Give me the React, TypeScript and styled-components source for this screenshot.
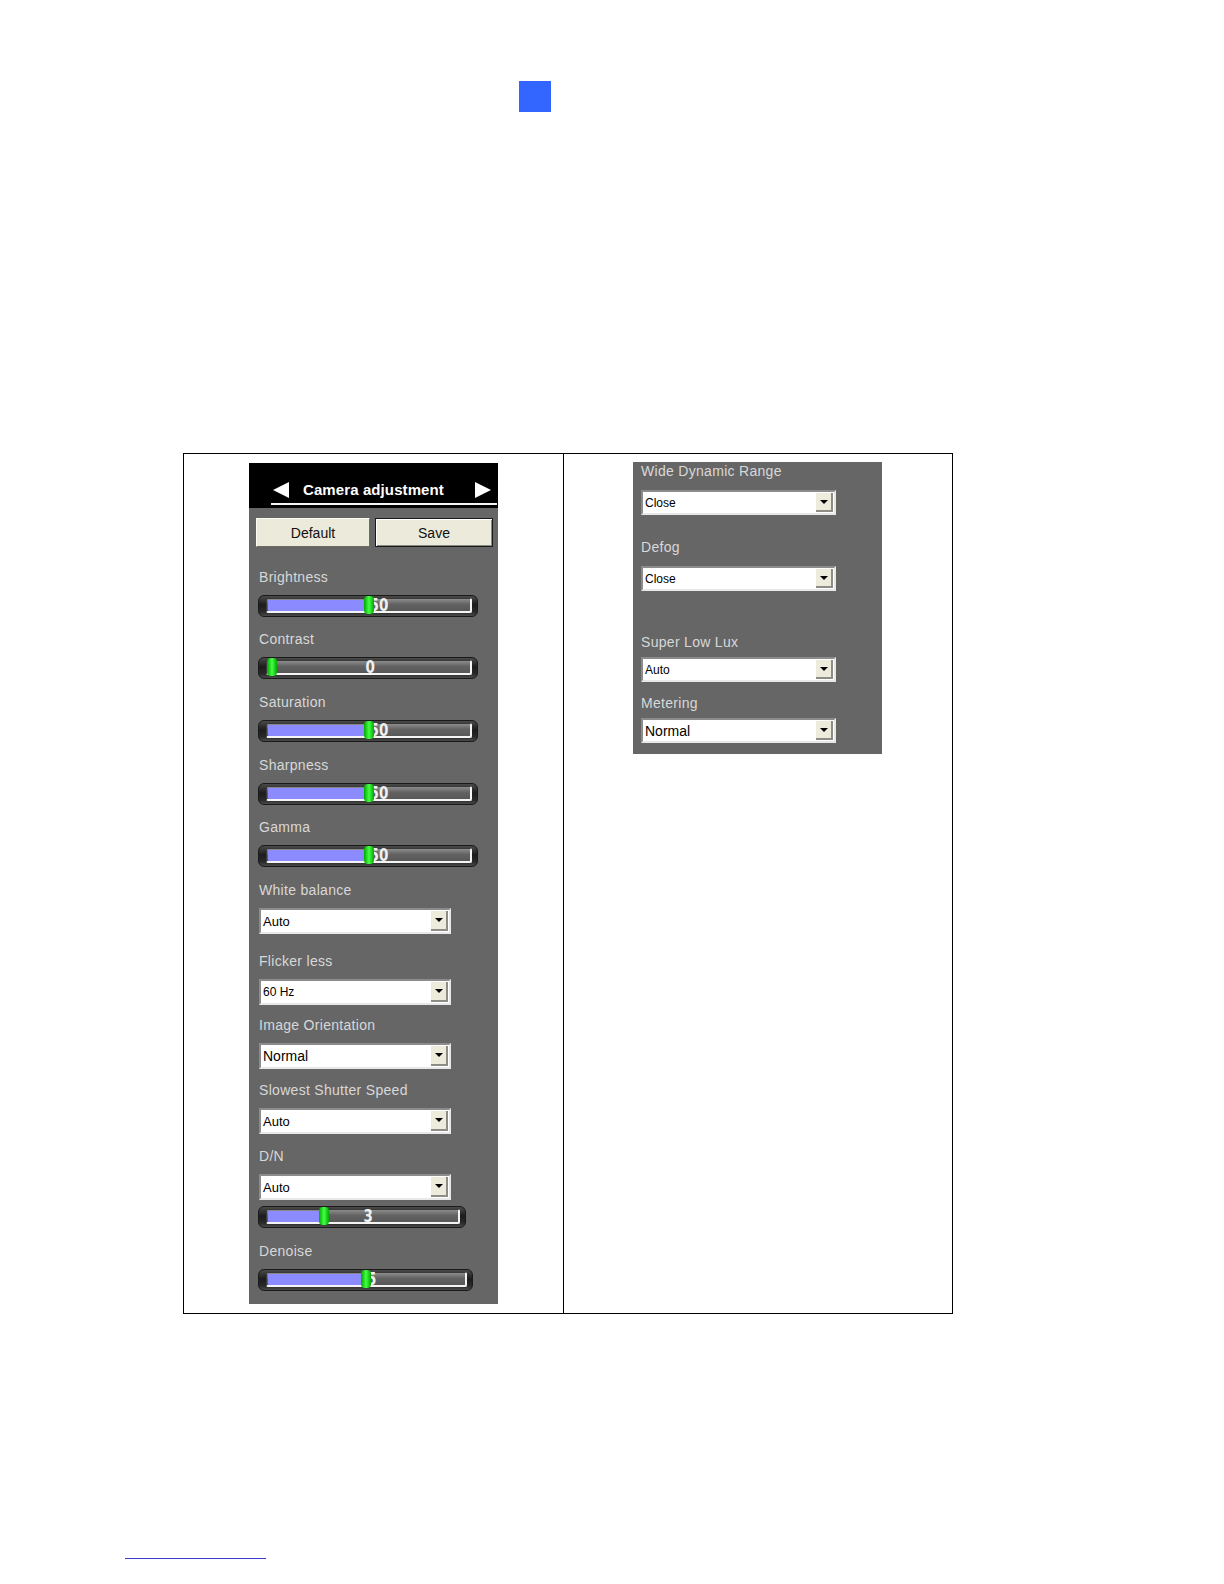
import React from 'react'
import styled, { createGlobalStyle } from 'styled-components'

const GlobalStyle = createGlobalStyle`
  html, body {
    margin: 0;
    padding: 0;
    background: #ffffff;
    overflow: hidden;
  }
  body {
    font-family: "Liberation Sans", Arial, sans-serif;
  }
`

const Page = styled.div`
  padding-top: 81px;
  display: flex;
  flex-direction: column;
`

const Marker = styled.div`
  width: 32px;
  height: 31px;
  margin-left: 519px;
  background: #3366ff;
`

const Table = styled.div`
  margin-top: 341px;
  margin-left: 183px;
  width: 770px;
  height: 861px;
  box-sizing: border-box;
  border: 1px solid #000;
  display: grid;
  grid-template-columns: 380px 1fr;
`

const Cell = styled.div<{ $padLeft: number; $padTop: number; $divider?: boolean }>`
  padding-left: ${p => p.$padLeft}px;
  padding-top: ${p => p.$padTop}px;
  border-right: ${p => (p.$divider ? '1px solid #000' : 'none')};
`

const Panel = styled.div<{ $h: number }>`
  width: 249px;
  height: ${p => p.$h}px;
  background: #666666;
  display: flex;
  flex-direction: column;
  box-sizing: border-box;
`

const Header = styled.div`
  height: 45px;
  background: #000;
  padding-top: 15px;
  box-sizing: border-box;
`

const TitleRow = styled.div`
  margin-left: 22px;
  width: 226px;
  height: 27px;
  box-sizing: border-box;
  border-bottom: 2px solid #f4f4f4;
  display: flex;
  align-items: center;
  padding-bottom: 2px;
`

const Arrow = styled.div<{ $dir: 'left' | 'right' }>`
  width: 0;
  height: 0;
  border-top: 8px solid transparent;
  border-bottom: 8px solid transparent;
  ${p =>
    p.$dir === 'left'
      ? 'border-right: 16px solid #fff; margin-left: 2px;'
      : 'border-left: 16px solid #fff; margin-left: auto; margin-right: 6px;'}
`

const Title = styled.span`
  margin-left: 14px;
  color: #fff;
  font-size: 15px;
  font-weight: bold;
  letter-spacing: 0.1px;
`

const ButtonRow = styled.div`
  display: flex;
  gap: 5px;
  margin-top: 10px;
  padding-left: 7px;
`

const Button = styled.div<{ $w: number; $active?: boolean }>`
  width: ${p => p.$w}px;
  height: 29px;
  box-sizing: border-box;
  background: #ebeadb;
  border: 1px solid;
  border-color: ${p => (p.$active ? '#1a1a1a' : '#fbfbf3 #6c6c62 #6c6c62 #fbfbf3')};
  box-shadow: ${p => (p.$active ? 'inset 1px 1px 0 #fff, inset -1px -1px 0 #8a8a80' : 'none')};
  display: flex;
  align-items: center;
  justify-content: center;
  font-size: 14px;
  color: #111;
`

const Field = styled.div<{ $gap: number; $indent: number }>`
  margin-top: ${p => p.$gap}px;
  display: flex;
  flex-direction: column;
  padding-left: ${p => p.$indent}px;
`

const Label = styled.div<{ $after: number }>`
  font-size: 14px;
  line-height: 16px;
  height: 16px;
  color: #d8d8d8;
  letter-spacing: 0.3px;
  margin-bottom: ${p => p.$after}px;
`

const SliderShell = styled.div<{ $w: number; $top?: number }>`
  width: ${p => p.$w}px;
  height: 22px;
  margin-left: -1px;
  margin-top: ${p => p.$top ?? 0}px;
  box-sizing: border-box;
  border-radius: 6px;
  background: linear-gradient(#4a4a4a, #1c1c1c 45%, #2a2a2a 80%, #4a4a4a);
  border: 1px solid #1a1a1a;
  padding: 2px 5px 3px 7px;
`

const Track = styled.div`
  position: relative;
  height: 100%;
  box-sizing: border-box;
  border-radius: 2px;
  background: linear-gradient(#8c8c8c, #626262 45%, #585858);
  border-left: 1px solid #3a3a3a;
  border-top: 1px solid #3a3a3a;
  border-right: 2px solid #f4f4f4;
  border-bottom: 2px solid #f4f4f4;
`

const Fill = styled.div`
  position: absolute;
  left: 1px;
  top: 1px;
  bottom: 0;
  background: #8b8bff;
  border-radius: 1px;
`

const Value = styled.span`
  position: absolute;
  left: calc(50% + 1px);
  top: -3px;
  font-family: "DejaVu Sans Condensed", "DejaVu Sans", sans-serif;
  font-weight: bold;
  font-size: 15px;
  line-height: 16px;
  color: #f0f0f0;
  transform: scaleY(1.15);
  transform-origin: top left;
`

const Thumb = styled.div`
  position: absolute;
  top: -3px;
  bottom: -3px;
  width: 10px;
  margin-left: -5px;
  border-radius: 4px;
  background: linear-gradient(90deg, #00a800, #44ff44 50%, #00a800);
`

const Select = styled.div<{ $w: number; $h: number }>`
  width: ${p => p.$w}px;
  height: ${p => p.$h}px;
  box-sizing: border-box;
  background: #fff;
  border: 2px solid;
  border-color: #8c8c8c #e8e8e8 #e8e8e8 #8c8c8c;
  display: flex;
  align-items: center;
`

const SelectText = styled.span<{ $size: number }>`
  flex: 1;
  padding-left: 2px;
  font-size: ${p => p.$size}px;
  color: #000;
`

const SelectButton = styled.div`
  width: 17px;
  align-self: stretch;
  margin: 1px 1px 1px 0;
  box-sizing: border-box;
  background: #ecebdc;
  border-right: 2px solid #8d8d86;
  border-bottom: 2px solid #8d8d86;
  display: flex;
  align-items: center;
  justify-content: center;
`

const Caret = styled.div`
  width: 0;
  height: 0;
  border-left: 4px solid transparent;
  border-right: 4px solid transparent;
  border-top: 4px solid #000;
`

const FootLink = styled.div`
  margin-top: 244px;
  margin-left: 125px;
  width: 141px;
  height: 0;
  border-top: 1px solid #3b3bd0;
`

type SliderProps = { width: number; value: number; max: number; top?: number }

const Slider = ({ width, value, max, top }: SliderProps) => {
  const pct = (value / max) * 100
  return (
    <SliderShell $w={width} $top={top}>
      <Track>
        <Fill style={{ width: `${pct}%` }} />
        <Value style={value === 0 ? { left: 'calc(50% - 3px)' } : undefined}>{value}</Value>
        <Thumb style={{ left: `calc(${pct}% + ${value === 0 ? 5 : 0}px)` }} />
      </Track>
    </SliderShell>
  )
}

type DropProps = { text: string; width: number; height?: number; size?: number }

const Dropdown = ({ text, width, height = 26, size = 13 }: DropProps) => (
  <Select $w={width} $h={height}>
    <SelectText $size={size}>{text}</SelectText>
    <SelectButton>
      <Caret />
    </SelectButton>
  </Select>
)

const sliders = [
  { label: 'Brightness', value: 50, gap: 22 },
  { label: 'Contrast', value: 0, gap: 14 },
  { label: 'Saturation', value: 50, gap: 15 },
  { label: 'Sharpness', value: 50, gap: 15 },
  { label: 'Gamma', value: 50, gap: 14 }
]

const selects = [
  { label: 'White balance', text: 'Auto', gap: 15, size: 13 },
  { label: 'Flicker less', text: '60 Hz', gap: 19, size: 12 },
  { label: 'Image Orientation', text: 'Normal', gap: 12, size: 14 },
  { label: 'Slowest Shutter Speed', text: 'Auto', gap: 13, size: 13 }
]

const rightFields = [
  { label: 'Wide Dynamic Range', text: 'Close', gap: 1, after: 11, size: 12 },
  { label: 'Defog', text: 'Close', gap: 24, after: 11, size: 12 },
  { label: 'Super Low Lux', text: 'Auto', gap: 43, after: 7, size: 12 },
  { label: 'Metering', text: 'Normal', gap: 13, after: 7, size: 14 }
]

export default function App() {
  return (
    <>
      <GlobalStyle />
      <Page>
        <Marker />
        <Table>
          <Cell $padLeft={65} $padTop={9} $divider>
            <Panel $h={841}>
              <Header>
                <TitleRow>
                  <Arrow $dir="left" />
                  <Title>Camera adjustment</Title>
                  <Arrow $dir="right" />
                </TitleRow>
              </Header>
              <ButtonRow>
                <Button $w={114}>Default</Button>
                <Button $w={118} $active>
                  Save
                </Button>
              </ButtonRow>
              {sliders.map(s => (
                <Field key={s.label} $gap={s.gap} $indent={10}>
                  <Label $after={10}>{s.label}</Label>
                  <Slider width={220} value={s.value} max={100} />
                </Field>
              ))}
              {selects.map(s => (
                <Field key={s.label} $gap={s.gap} $indent={10}>
                  <Label $after={10}>{s.label}</Label>
                  <Dropdown text={s.text} width={192} size={s.size} />
                </Field>
              ))}
              <Field $gap={14} $indent={10}>
                <Label $after={10}>D/N</Label>
                <Dropdown text="Auto" width={192} />
                <Slider width={208} value={3} max={10} top={6} />
              </Field>
              <Field $gap={15} $indent={10}>
                <Label $after={10}>Denoise</Label>
                <Slider width={215} value={5} max={10} />
              </Field>
            </Panel>
          </Cell>
          <Cell $padLeft={69} $padTop={8}>
            <Panel $h={292}>
              {rightFields.map(f => (
                <Field key={f.label} $gap={f.gap} $indent={8}>
                  <Label $after={f.after}>{f.label}</Label>
                  <Dropdown text={f.text} width={195} height={25} size={f.size} />
                </Field>
              ))}
            </Panel>
          </Cell>
        </Table>
        <FootLink />
      </Page>
    </>
  )
}
